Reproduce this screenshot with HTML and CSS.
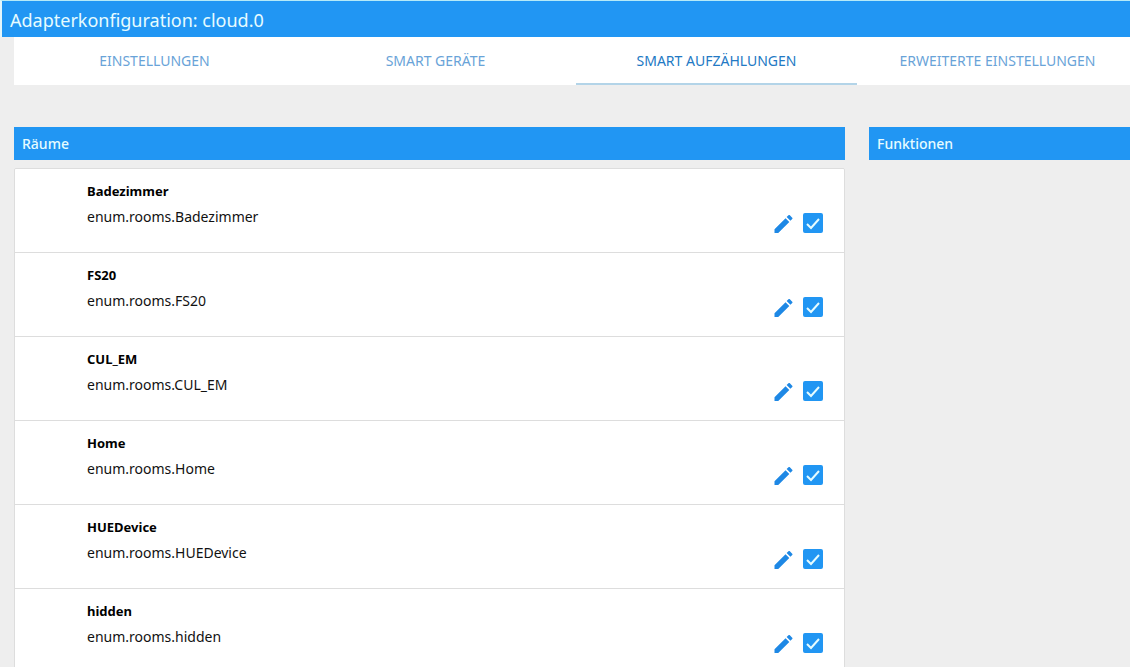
FILE: index.html
```html
<!DOCTYPE html>
<html lang="de">
<head>
<meta charset="utf-8">
<title>Adapterkonfiguration: cloud.0</title>
<link rel="stylesheet" href="styles.css">
</head>
<body>
<svg class="sprite" aria-hidden="true">
  <symbol id="pencil" viewBox="3 3 18 18">
    <path d="M3 17.25V21h3.75L17.81 9.94l-3.75-3.75L3 17.25zM20.71 7.04a1 1 0 0 0 0-1.41l-2.34-2.34a1 1 0 0 0-1.41 0l-1.83 1.83 3.75 3.75 1.83-1.83z"/>
  </symbol>
  <symbol id="check" viewBox="0 0 20 20">
    <path d="M4 11 8 15 16 6"/>
  </symbol>
</svg>
<header class="titlebar"><h1 class="title">Adapterkonfiguration: cloud.0</h1></header>
<nav class="tabs">
  <a class="tab" href="#main">EINSTELLUNGEN</a>
  <a class="tab" href="#devices">SMART GERÄTE</a>
  <a class="tab active" href="#enums" aria-current="page">SMART AUFZÄHLUNGEN</a>
  <a class="tab" href="#extended">ERWEITERTE EINSTELLUNGEN</a>
</nav>
<main class="columns" id="enums">
  <section class="rooms">
    <h2 class="heading">Räume</h2>
    <ul class="collection">
      <li class="item">
        <div class="text"><label class="name" for="r1">Badezimmer</label><p class="path">enum.rooms.Badezimmer</p></div>
        <div class="actions"><button class="edit" type="button" aria-label="Bearbeiten"><svg class="pencil"><use href="#pencil"/></svg></button><span class="box"><input class="checkbox" type="checkbox" id="r1" checked><svg class="check"><use href="#check"/></svg></span></div>
      </li>
      <li class="item">
        <div class="text"><label class="name" for="r2">FS20</label><p class="path">enum.rooms.FS20</p></div>
        <div class="actions"><button class="edit" type="button" aria-label="Bearbeiten"><svg class="pencil"><use href="#pencil"/></svg></button><span class="box"><input class="checkbox" type="checkbox" id="r2" checked><svg class="check"><use href="#check"/></svg></span></div>
      </li>
      <li class="item">
        <div class="text"><label class="name" for="r3">CUL_EM</label><p class="path">enum.rooms.CUL_EM</p></div>
        <div class="actions"><button class="edit" type="button" aria-label="Bearbeiten"><svg class="pencil"><use href="#pencil"/></svg></button><span class="box"><input class="checkbox" type="checkbox" id="r3" checked><svg class="check"><use href="#check"/></svg></span></div>
      </li>
      <li class="item">
        <div class="text"><label class="name" for="r4">Home</label><p class="path">enum.rooms.Home</p></div>
        <div class="actions"><button class="edit" type="button" aria-label="Bearbeiten"><svg class="pencil"><use href="#pencil"/></svg></button><span class="box"><input class="checkbox" type="checkbox" id="r4" checked><svg class="check"><use href="#check"/></svg></span></div>
      </li>
      <li class="item">
        <div class="text"><label class="name" for="r5">HUEDevice</label><p class="path">enum.rooms.HUEDevice</p></div>
        <div class="actions"><button class="edit" type="button" aria-label="Bearbeiten"><svg class="pencil"><use href="#pencil"/></svg></button><span class="box"><input class="checkbox" type="checkbox" id="r5" checked><svg class="check"><use href="#check"/></svg></span></div>
      </li>
      <li class="item">
        <div class="text"><label class="name" for="r6">hidden</label><p class="path">enum.rooms.hidden</p></div>
        <div class="actions"><button class="edit" type="button" aria-label="Bearbeiten"><svg class="pencil"><use href="#pencil"/></svg></button><span class="box"><input class="checkbox" type="checkbox" id="r6" checked><svg class="check"><use href="#check"/></svg></span></div>
      </li>
    </ul>
  </section>
  <section class="functions">
    <h2 class="heading">Funktionen</h2>
  </section>
</main>
</body>
</html>
```
FILE: styles.css
```css
* {
  box-sizing: border-box;
}

html {
  height: 100%;
  overflow: hidden;
}

body {
  height: 100%;
  margin: 0;
  overflow: hidden;
  background: #eee;
  color: #111;
  font: 14px/25px "Noto Sans", "Open Sans", sans-serif;
}

.sprite {
  position: absolute;
  width: 0;
  height: 0;
}

.titlebar {
  padding: 0 8px;
  background: #2196f3;
  border-top: 1px solid #b5eaf8;
  border-left: 2px solid #e4f6fb;
}

.title {
  margin: 0;
  color: #e6fcff;
  font-size: 18px;
  font-weight: 400;
  line-height: 38px;
  height: 36px;
}

/* The tab strip runs on past the right edge of the window. */
.tabs {
  display: grid;
  grid-template-columns: repeat(4, 1fr);
  margin: 0 -8px 0 14px;
  background: #fff;
}

.tab {
  height: 48px;
  border-bottom: 2px solid transparent;
  color: #69a3d8;
  line-height: 48px;
  text-align: center;
  text-decoration: none;
  white-space: nowrap;
}

.tab.active {
  border-color: #b3d4e8;
  color: #2279c4;
}

.columns {
  display: grid;
  grid-template-columns: 831fr 261fr;
  column-gap: 24px;
  padding: 42px 0 0 14px;
}

.heading {
  margin: 0 0 8px;
  padding: 0 8px;
  background: #2196f3;
  color: #e6fcff;
  font-size: 14px;
  font-weight: 500;
  line-height: 33px;
}

.collection {
  margin: 0;
  padding: 0;
  overflow: hidden;
  border: 1px solid #ddd;
  border-radius: 2px;
  list-style: none;
}

.item {
  display: flex;
  justify-content: space-between;
  min-height: 84px;
  padding: 10px 21px 10px 72px;
  background: #fff;
  border-bottom: 1px solid #ddd;
}

.name {
  display: block;
  color: #000;
  font-size: 13px;
  font-weight: 700;
}

.path {
  margin: 0;
}

.actions {
  display: flex;
  gap: 10px;
  align-items: flex-end;
  align-self: flex-end;
  margin-bottom: 9px;
}

.edit {
  display: flex;
  padding: 0;
  background: none;
  border: 0;
  cursor: pointer;
}

.pencil {
  width: 19px;
  height: 18px;
  fill: #1e88e5;
}

.box {
  display: grid;
  width: 20px;
  height: 20px;
}

.checkbox,
.check {
  grid-area: 1 / 1;
  width: 20px;
  height: 20px;
}

.checkbox {
  margin: 0;
  appearance: none;
  border: 2px solid #5a5a5a;
  border-radius: 2px;
}

.checkbox:checked {
  background: #2196f3;
  border-color: #2196f3;
}

.check {
  visibility: hidden;
  fill: none;
  pointer-events: none;
  stroke: #e6fcff;
  stroke-width: 2;
}

.checkbox:checked + .check {
  visibility: visible;
}
```
